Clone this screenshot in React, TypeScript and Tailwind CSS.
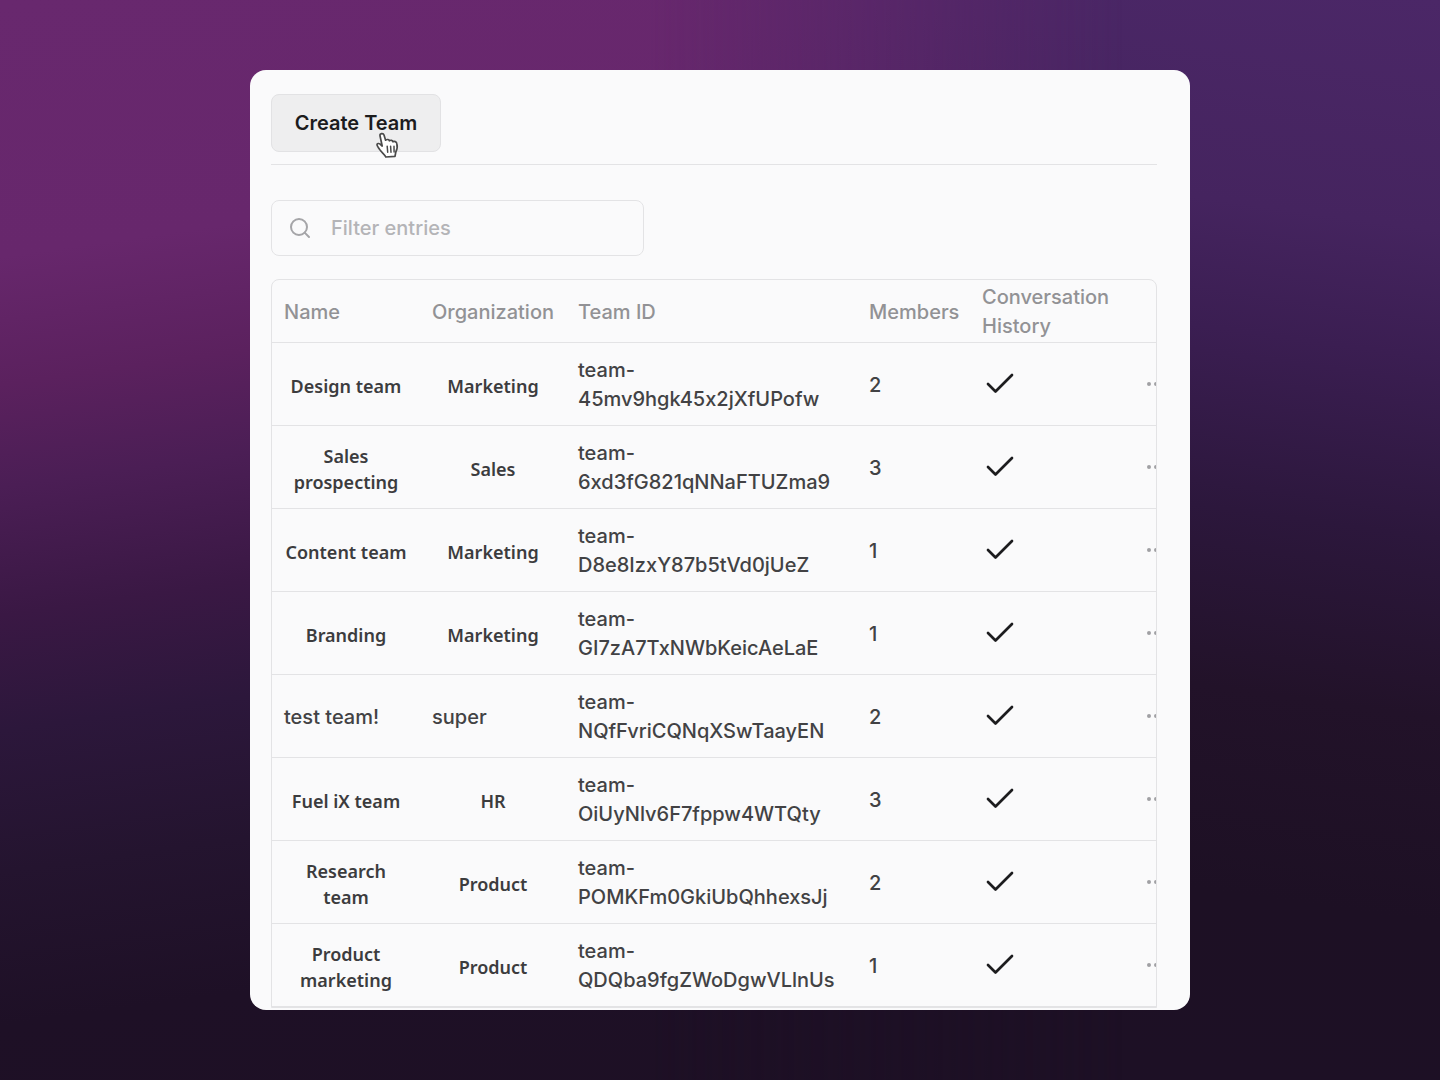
import React from "react";
import { Search, Check, MoreHorizontal } from "lucide-react";

interface Team {
  name: string;
  org: string;
  id: string;
  members: number;
  highlighted: boolean;
}

const TEAMS: Team[] = [
  { name: "Design team", org: "Marketing", id: "team-45mv9hgk45x2jXfUPofw", members: 2, highlighted: true },
  { name: "Sales prospecting", org: "Sales", id: "team-6xd3fG821qNNaFTUZma9", members: 3, highlighted: true },
  { name: "Content team", org: "Marketing", id: "team-D8e8IzxY87b5tVd0jUeZ", members: 1, highlighted: true },
  { name: "Branding", org: "Marketing", id: "team-GI7zA7TxNWbKeicAeLaE", members: 1, highlighted: true },
  { name: "test team!", org: "super", id: "team-NQfFvriCQNqXSwTaayEN", members: 2, highlighted: false },
  { name: "Fuel iX team", org: "HR", id: "team-OiUyNlv6F7fppw4WTQty", members: 3, highlighted: true },
  { name: "Research team", org: "Product", id: "team-POMKFm0GkiUbQhhexsJj", members: 2, highlighted: true },
  { name: "Product marketing", org: "Product", id: "team-QDQba9fgZWoDgwVLlnUs", members: 1, highlighted: true },
];

function HandCursor() {
  return (
    <svg
      className="pointer-events-none absolute top-[38px] left-[104px] h-7 w-6"
      viewBox="0 0 24 28"
      fill="#fff"
      stroke="#4a4a4a"
      strokeWidth="1.7"
      strokeLinejoin="round"
      strokeLinecap="round"
      aria-hidden="true"
    >
      <path d="M5 3.800C4.600 1.400 8.200.8 9 3l1.600 5.200c1.400-1.200 3.400-.8 3.800.6 1.200-1 3.200-.6 3.600 1 1.400-.8 3.400-.2 3.800 1.600.8 3.200.6 5.600-1 8.600l-.8 4.400-9.200.6c-.4-2-4.400-4.600-6.200-7.600-1-1.800-3-3.800-2.600-5 .6-1.400 2.600-1 3.600.2L7.200 14z" />
      <path d="M12.200 14.200l.5 6M15.600 14.200l.4 6M19 14.200l.1 5.800" fill="none" strokeWidth="1.500" />
    </svg>
  );
}

function TeamRow({ team }: { team: Team }) {
  const labelStyle = team.highlighted
    ? "px-2.5 pt-1 text-center font-['Noto_Sans',sans-serif] text-lg leading-[26px] font-semibold text-[#3c3c3e]"
    : "px-3 pt-[3px]";

  return (
    <tr className="h-[83px] border-b border-[#e3e3e5]">
      <td className={labelStyle}>{team.name}</td>
      <td className={labelStyle}>{team.org}</td>
      <td className="px-3 pt-[3px]">
        team-
        <br />
        {team.id.replace("team-", "")}
      </td>
      <td className="px-3 pt-[3px]">{team.members}</td>
      <td className="px-3">
        <Check className="h-9 w-9 text-[#1c1c1e]" strokeWidth={1.8} aria-label="Enabled" />
      </td>
      <td className="pl-3">
        <button type="button" className="block text-[#a0a0a3]" aria-label={`Actions for ${team.name}`}>
          <MoreHorizontal className="h-6 w-6" />
        </button>
      </td>
    </tr>
  );
}

export default function App() {
  return (
    <main className="relative isolate flex min-h-screen flex-col items-center bg-[linear-gradient(188deg,#4b2767_0%,#45245f_18%,#3b1e52_28%,#2c173c_42%,#221229_56%,#1d1024_72%,#1d1026_100%)] py-[70px] font-['Inter',sans-serif]">
      {/* Magenta glow fading out towards the right */}
      <div className="absolute inset-0 -z-10 bg-[linear-gradient(172deg,#68286e_0%,#67276c_20%,#5b215e_30%,#4b1e55_38%,#3a1844_48%,#2c173b_57%,#24142f_68%,#1e1026_80%,#1d1024_100%)] [mask-image:linear-gradient(to_right,black_45%,transparent_78%)]" />

      <div className="h-[calc(100vh-140px)] w-full max-w-[940px] overflow-hidden rounded-2xl bg-[#fafafb] pt-6 pr-[33px] pl-[21px] text-xl leading-[29px] font-medium text-[#424244] [font-variant-ligatures:no-contextual]">
        {/* Toolbar */}
        <div className="border-b border-[#e3e3e5] pb-3">
          <div className="relative inline-block align-top">
            <button
              type="button"
              className="h-[58px] w-[170px] rounded-lg border border-[#e2e2e4] bg-[#eeeeef] font-semibold text-[#1c1c1e]"
            >
              Create Team
            </button>
            <HandCursor />
          </div>
        </div>

        {/* Filter */}
        <label className="mt-[35px] flex h-14 w-[373px] items-center gap-[19px] rounded-lg border border-[#e3e3e5] px-4">
          <Search className="h-6 w-6 text-[#a5a5a8]" strokeWidth={2} />
          <input
            type="text"
            aria-label="Filter entries"
            placeholder="Filter entries"
            className="min-w-0 flex-1 bg-transparent outline-none placeholder:text-[#b4b4b7]"
          />
        </label>

        {/* Team list */}
        <div className="mt-[23px] overflow-hidden rounded-t-lg border border-[#e3e3e5]">
          <table className="w-full table-fixed border-collapse text-left">
            <colgroup>
              <col className="w-[148px]" />
              <col className="w-[146px]" />
              <col className="w-[291px]" />
              <col className="w-[113px]" />
              <col />
              <col className="w-6" />
            </colgroup>
            <thead>
              <tr className="h-[62px] border-b border-[#e3e3e5] text-[#929295]">
                <th className="px-3 pt-[3px] font-medium">Name</th>
                <th className="px-3 pt-[3px] font-medium">Organization</th>
                <th className="px-3 pt-[3px] font-medium">Team ID</th>
                <th className="px-3 pt-[3px] font-medium">Members</th>
                <th className="px-3 pt-[3px] font-medium">
                  Conversation
                  <br />
                  History
                </th>
                <th />
              </tr>
            </thead>
            <tbody>
              {TEAMS.map((team) => (
                <TeamRow key={team.id} team={team} />
              ))}
            </tbody>
          </table>
        </div>
      </div>
    </main>
  );
}
